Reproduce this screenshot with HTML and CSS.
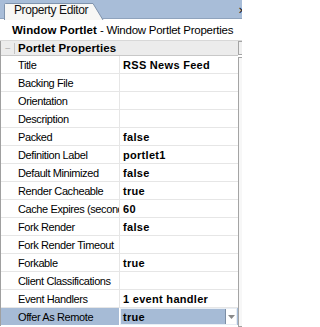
FILE: index.html
```html
<!DOCTYPE html>
<html>
<head>
<meta charset="utf-8">
<link rel="stylesheet" href="styles.css">
</head>
<body>
<div class="tabbar">
  <div class="tab">
    <svg class="tabshape" width="100" height="17" viewBox="0 0 100 17"><path d="M0.5 17 V1.5 Q0.5 0.5 1.5 0.5 H89 L99 17" fill="#f7f7f5" stroke="#7f93ad" stroke-width="1"/></svg>
    <span class="tablabel">Property Editor</span>
  </div>
  <span class="close">✕</span>
</div>
<div class="header"><b>Window Portlet</b> - Window Portlet Properties</div>
<div class="body">
  <div class="grid">
    <div class="section"><span class="collapse">−</span><span class="sep"></span><b>Portlet Properties</b></div>
    <div class="row"><div class="k">Title</div><div class="v">RSS News Feed</div></div>
    <div class="row"><div class="k">Backing File</div><div class="v"></div></div>
    <div class="row"><div class="k">Orientation</div><div class="v"></div></div>
    <div class="row"><div class="k">Description</div><div class="v"></div></div>
    <div class="row"><div class="k">Packed</div><div class="v">false</div></div>
    <div class="row"><div class="k">Definition Label</div><div class="v">portlet1</div></div>
    <div class="row"><div class="k">Default Minimized</div><div class="v">false</div></div>
    <div class="row"><div class="k">Render Cacheable</div><div class="v">true</div></div>
    <div class="row"><div class="k"><span class="clipped">Cache Expires (seconds)</span></div><div class="v">60</div></div>
    <div class="row"><div class="k">Fork Render</div><div class="v">false</div></div>
    <div class="row"><div class="k">Fork Render Timeout</div><div class="v"></div></div>
    <div class="row"><div class="k">Forkable</div><div class="v">true</div></div>
    <div class="row"><div class="k">Client Classifications</div><div class="v"></div></div>
    <div class="row"><div class="k">Event Handlers</div><div class="v">1 event handler</div></div>
    <div class="row selected"><div class="k">Offer As Remote</div><div class="v combo"><span class="ctext">true</span><span class="arrow"><svg width="7" height="4" viewBox="0 0 7 4"><path d="M0 0H7L3.5 4Z" fill="#8a8a8a"/></svg></span></div></div>
  </div>
  <div class="scroll">
    <div class="sbtn"></div>
    <div class="strack"></div>
  </div>
</div>
</body>
</html>
```
FILE: styles.css
```css
html, body {
  margin: 0;
  padding: 0;
}
body {
  width: 242px;
  height: 327px;
  overflow: hidden;
  background: #fff;
  font-family: "Liberation Sans", Arial, sans-serif;
  font-size: 11px;
  color: #000;
}
.tabbar {
  height: 19px;
  background: #a8bdd8;
  border-bottom: 1px solid #8fa3bd;
  display: flex;
  align-items: flex-end;
  padding-left: 4px;
  box-sizing: border-box;
  position: relative;
}
.tab {
  position: relative;
  width: 100px;
  height: 16px;
  margin-bottom: -1px;
}
.tabshape {
  position: absolute;
  left: 0;
  top: 0;
}
.tablabel {
  position: relative;
  display: block;
  padding-left: 10px;
  line-height: 15px;
  font-size: 12px;
  letter-spacing: -0.4px;
  color: #111;
}
.close {
  position: absolute;
  right: -4px;
  top: 5px;
  font-size: 10px;
  color: #222;
}
.header {
  height: 22px;
  line-height: 23px;
  padding-left: 12px;
  font-size: 11.5px;
  letter-spacing: -0.25px;
  white-space: nowrap;
  border-bottom: 1px solid #d8d8d8;
  box-sizing: border-box;
}
.header b {
  letter-spacing: 0.1px;
}
.body {
  display: flex;
  align-items: flex-start;
}
.grid {
  width: 238px;
  flex: none;
  border-left: 1px solid #a0a0a0;
  box-sizing: border-box;
}
.section {
  height: 15px;
  background: #ececec;
  border-bottom: 1px solid #c8c8c8;
  display: flex;
  align-items: center;
  font-size: 11.5px;
  letter-spacing: 0.1px;
  box-sizing: border-box;
}
.collapse {
  width: 12px;
  text-align: center;
  color: #b0b0b0;
  font-size: 10px;
  margin-left: 1px;
}
.sep {
  width: 1px;
  height: 11px;
  background: #c4c4c4;
  margin-right: 3px;
}
.row {
  display: flex;
  height: 18px;
  border-bottom: 1px solid #e6e6e6;
  box-sizing: border-box;
  white-space: nowrap;
}
.k {
  width: 119px;
  flex: none;
  padding-left: 17px;
  box-sizing: border-box;
  border-right: 1px solid #e6e6e6;
  overflow: hidden;
  line-height: 18px;
  letter-spacing: -0.4px;
}
.clipped {
  display: block;
  width: 101px;
  overflow: hidden;
  text-overflow: clip;
}
.v {
  flex: 1;
  padding-left: 3px;
  font-weight: bold;
  line-height: 18px;
  letter-spacing: 0.3px;
  overflow: hidden;
}
.selected {
  background: #a6bbd6;
  border-bottom-color: #fff;
}
.selected .k {
  border-right-color: #fff;
}
.combo {
  display: flex;
  align-items: stretch;
  margin-right: 1px;
  border: 1px solid #e8eef5;
  padding-left: 2px;
}
.ctext {
  flex: 1;
  line-height: 16px;
}
.arrow {
  width: 10px;
  background: #fff;
  border-left: 1px solid #7d8ea5;
  display: flex;
  align-items: center;
  justify-content: center;
}
.scroll {
  width: 16px;
  flex: none;
}
.sbtn {
  height: 14px;
  border: 1px solid #a4a4a4;
  background: #f0f0f0;
  box-sizing: border-box;
}
.strack {
  margin-top: 2px;
  height: 270px;
  border: 1px solid #a4a4a4;
  background: #f7f7f7;
  box-sizing: border-box;
}
```
